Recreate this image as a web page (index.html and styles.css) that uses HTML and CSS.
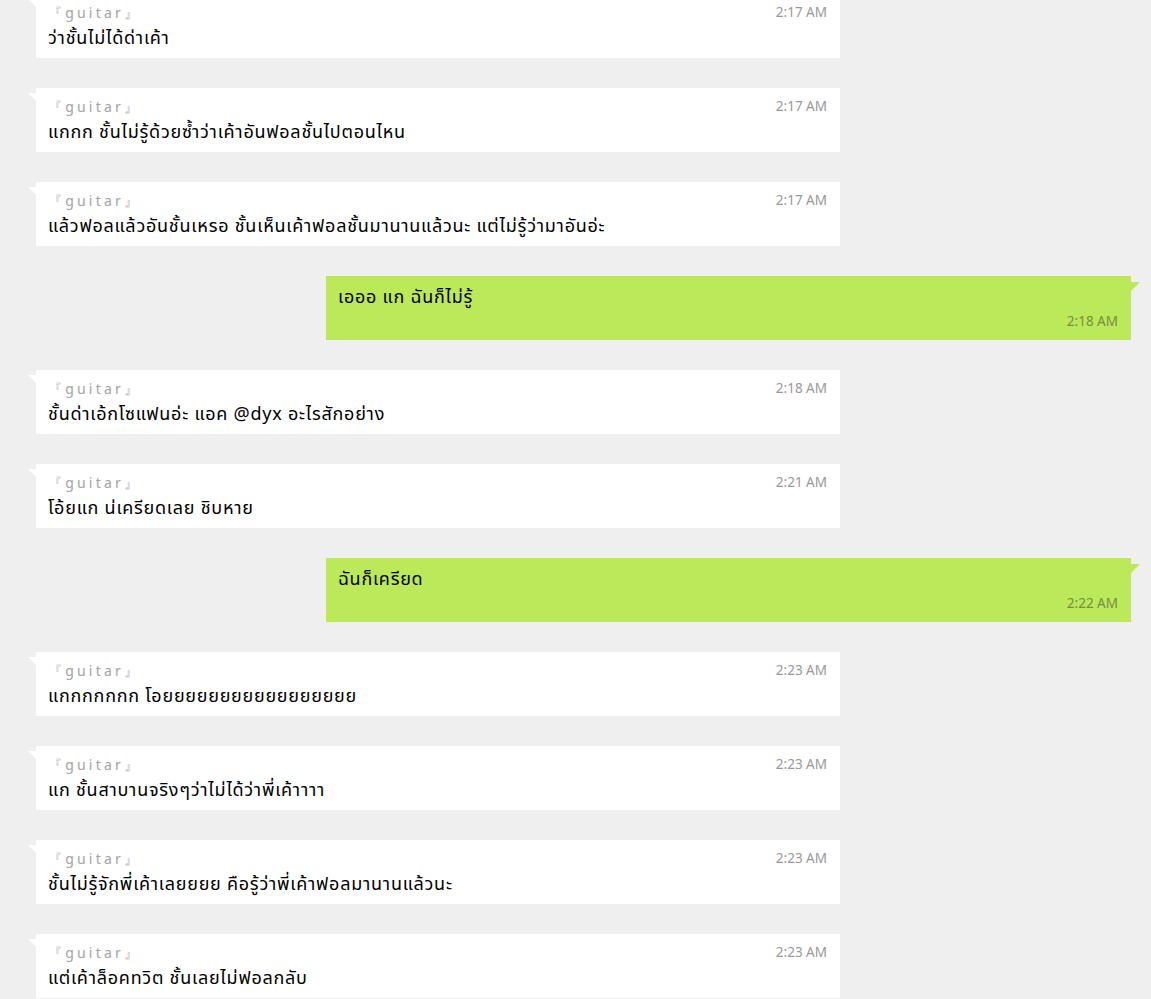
FILE: index.html
```html
<!DOCTYPE html>
<html lang="th">
<head>
<meta charset="utf-8">
<link rel="stylesheet" href="styles.css">
</head>
<body>
<div class="chat">
  <div class="msg in"><div class="head"><span class="name">『guitar』</span><span class="time">2:17 AM</span></div><div class="text">ว่าชั้นไม่ได้ด่าเค้า</div></div>
  <div class="msg in"><div class="head"><span class="name">『guitar』</span><span class="time">2:17 AM</span></div><div class="text">แกกก ชั้นไม่รู้ด้วยซ้ำว่าเค้าอันฟอลชั้นไปตอนไหน</div></div>
  <div class="msg in"><div class="head"><span class="name">『guitar』</span><span class="time">2:17 AM</span></div><div class="text">แล้วฟอลแล้วอันชั้นเหรอ ชั้นเห็นเค้าฟอลชั้นมานานแล้วนะ แต่ไม่รู้ว่ามาอันอ่ะ</div></div>
  <div class="msg out"><div class="text">เอออ แก ฉันก็ไม่รู้</div><div class="time">2:18 AM</div></div>
  <div class="msg in"><div class="head"><span class="name">『guitar』</span><span class="time">2:18 AM</span></div><div class="text">ชั้นด่าเอ้กโซแฟนอ่ะ แอค @dyx อะไรสักอย่าง</div></div>
  <div class="msg in"><div class="head"><span class="name">『guitar』</span><span class="time">2:21 AM</span></div><div class="text">โอ้ยแก น่เครียดเลย ชิบหาย</div></div>
  <div class="msg out"><div class="text">ฉันก็เครียด</div><div class="time">2:22 AM</div></div>
  <div class="msg in"><div class="head"><span class="name">『guitar』</span><span class="time">2:23 AM</span></div><div class="text">แกกกกกกก โอยยยยยยยยยยยยยยยยย</div></div>
  <div class="msg in"><div class="head"><span class="name">『guitar』</span><span class="time">2:23 AM</span></div><div class="text">แก ชั้นสาบานจริงๆว่าไม่ได้ว่าพี่เค้าาาา</div></div>
  <div class="msg in"><div class="head"><span class="name">『guitar』</span><span class="time">2:23 AM</span></div><div class="text">ชั้นไม่รู้จักพี่เค้าเลยยยย คือรู้ว่าพี่เค้าฟอลมานานแล้วนะ</div></div>
  <div class="msg in"><div class="head"><span class="name">『guitar』</span><span class="time">2:23 AM</span></div><div class="text">แต่เค้าล็อคทวิต ชั้นเลยไม่ฟอลกลับ</div></div>
</div>
</body>
</html>
```
FILE: styles.css
```css
html, body {
  margin: 0;
  padding: 0;
  background: #efefef;
  overflow: hidden;
}
body {
  font-family: "Segoe UI", "Noto Sans Thai", "Noto Sans", "Leelawadee UI", sans-serif;
  color: #000;
}
.chat {
  display: flex;
  flex-direction: column;
  gap: 30px;
  margin-top: -6px;
  padding: 0 20px 0 36px;
}
.msg {
  position: relative;
  box-sizing: border-box;
  height: 64px;
}
.msg.in {
  width: 804px;
  background: #ffffff;
  padding: 10px 13px 0 12px;
}
.msg.in::before {
  content: "";
  position: absolute;
  left: -8px;
  top: 5px;
  border-top: 8px solid #ffffff;
  border-left: 8px solid transparent;
}
.msg.out {
  width: 805px;
  margin-left: 290px;
  background: #bbe95a;
  padding: 9px 13px 0 12px;
}
.msg.out::after {
  content: "";
  position: absolute;
  right: -9px;
  top: 6px;
  border-top: 9px solid #bbe95a;
  border-right: 9px solid transparent;
}
.head {
  display: flex;
  justify-content: space-between;
  align-items: center;
  height: 18px;
}
.name {
  font-size: 14px;
  letter-spacing: 3.2px;
  color: #a3a3a3;
}
.time {
  font-size: 13.5px;
  color: #999999;
}
.msg.out .time {
  text-align: right;
  color: #75903f;
  margin-top: 1px;
}
.text {
  font-size: 18px;
  letter-spacing: 0.75px;
  line-height: 26px;
}
.msg.in .text {
  margin-top: 4px;
}
```
